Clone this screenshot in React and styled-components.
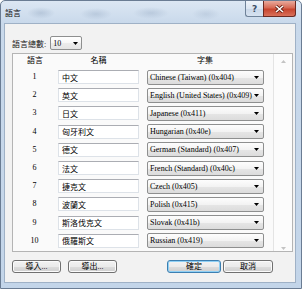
import styled, { createGlobalStyle } from 'styled-components'

const GlobalStyle = createGlobalStyle`
  html, body {
    margin: 0;
    padding: 0;
    background: #ffffff;
  }
  body {
    font-family: "Liberation Serif", "Noto Sans CJK TC", serif;
    font-size: 8px;
    color: #000;
  }
  * { box-sizing: border-box; }
`

const languages = [
  ['中文', 'Chinese (Taiwan) (0x404)'],
  ['英文', 'English (United States) (0x409)'],
  ['日文', 'Japanese (0x411)'],
  ['匈牙利文', 'Hungarian (0x40e)'],
  ['德文', 'German (Standard) (0x407)'],
  ['法文', 'French (Standard) (0x40c)'],
  ['捷克文', 'Czech (0x405)'],
  ['波蘭文', 'Polish (0x415)'],
  ['斯洛伐克文', 'Slovak (0x41b)'],
  ['俄羅斯文', 'Russian (0x419)'],
]

const Caret = ({ color = '#000' }) => (
  <svg width="5" height="3" viewBox="0 0 5 3">
    <path d="M0 0 H5 L2.5 3 Z" fill={color} />
  </svg>
)

const App = () => {
  return (
    <>
      <GlobalStyle />
      <Window>
        <TitleBar>
          <Title>語言</Title>
          <Caption>
            <HelpButton>?</HelpButton>
            <CloseButton>
              <svg width="9" height="8" viewBox="0 0 9 8">
                <path d="M1 1 L8 7 M8 1 L1 7" stroke="#5a1a10" strokeWidth="3" />
                <path d="M1 1 L8 7 M8 1 L1 7" stroke="#fff" strokeWidth="1.6" />
              </svg>
            </CloseButton>
          </Caption>
        </TitleBar>
        <Client>
          <TopRow>
            <Label>語言總數:</Label>
            <CountCombo>
              <span>10</span>
              <Caret />
            </CountCombo>
          </TopRow>
          <Panel>
            <Table>
              <HeadCell>語言</HeadCell>
              <HeadCell $width={81}>名稱</HeadCell>
              <HeadCell>字集</HeadCell>
              {languages.map(([name, charset], i) => (
                <Row key={i}>
                  <Num>{i + 1}</Num>
                  <NameInput defaultValue={name} />
                  <Combo>
                    <span>{charset}</span>
                    <Caret />
                  </Combo>
                </Row>
              ))}
            </Table>
            <ScrollBar>
              <Caret color="#c4c4c4" />
              <Caret color="#c4c4c4" />
            </ScrollBar>
          </Panel>
          <Footer>
            <Button $width={49}>導入...</Button>
            <Button $width={49}>導出...</Button>
            <Spacer />
            <Button $width={54} $default>確定</Button>
            <Button $width={50}>取消</Button>
          </Footer>
        </Client>
      </Window>
    </>
  )
}

const Window = styled.div`
  width: 302px;
  height: 289px;
  display: flex;
  flex-direction: column;
  padding: 0 5px 5px 3px;
  border: 1px solid #6a7c93;
  border-radius: 5px 5px 0 0;
  background:
    radial-gradient(ellipse 14px 6px at 40px 12px, rgba(150, 170, 195, 0.45), transparent),
    radial-gradient(ellipse 16px 6px at 95px 13px, rgba(150, 170, 195, 0.4), transparent),
    radial-gradient(ellipse 18px 6px at 150px 12px, rgba(150, 170, 195, 0.4), transparent),
    radial-gradient(ellipse 14px 6px at 205px 13px, rgba(150, 170, 195, 0.3), transparent),
    linear-gradient(to bottom, #dce7f3 0px, #c9d9eb 22px, #c3d5e9 100%);
`

const TitleBar = styled.div`
  height: 22px;
  display: flex;
  align-items: flex-start;
`

const Title = styled.div`
  margin: 6px 0 0 1px;
  line-height: 12px;
  color: #111;
  font-family: "Noto Sans CJK TC", sans-serif;
`

const Caption = styled.div`
  margin-left: auto;
  display: flex;
  height: 16px;
`

const HelpButton = styled.div`
  width: 18px;
  display: flex;
  align-items: center;
  justify-content: center;
  border: 1px solid #6f8299;
  border-top: none;
  border-right: none;
  border-radius: 0 0 0 3px;
  background: linear-gradient(to bottom, #eef3f9 0%, #dbe5f1 50%, #c9d7e8 51%, #d6e2f0 100%);
  font-family: "DejaVu Sans", sans-serif;
  font-size: 9px;
  font-weight: bold;
  color: #3d4f66;
`

const CloseButton = styled.div`
  width: 33px;
  display: flex;
  align-items: center;
  justify-content: center;
  border: 1px solid #6b2a22;
  border-top: none;
  border-radius: 0 0 3px 0;
  background: linear-gradient(to bottom, #e9aa9c 0%, #d76a55 45%, #c7442e 55%, #d9705a 100%);
`

const Client = styled.div`
  flex: 1;
  display: flex;
  flex-direction: column;
  padding: 12px 2px 9px 7px;
  background: #f2f2f2;
  border: 1px solid #9fb1c6;
`

const TopRow = styled.div`
  height: 14px;
  display: flex;
  align-items: center;
  gap: 4px;
`

const Label = styled.span`
  color: #111;
`

const CountCombo = styled.div`
  width: 32px;
  height: 14px;
  display: flex;
  align-items: center;
  justify-content: space-between;
  padding: 0 3px 0 2px;
  border: 1px solid #8e8f8f;
  border-radius: 2px;
  background: linear-gradient(to bottom, #ffffff 0%, #f7f7f7 50%, #ececec 51%, #e4e4e4 100%);
`

const Panel = styled.div`
  margin-top: 3px;
  height: 199px;
  display: flex;
  border: 1px solid #b4b4b4;
  background: #fafafa;
`

const Table = styled.div`
  flex: 1;
  display: grid;
  grid-template-columns: 45px 89px 117px;
  grid-template-rows: 14px;
  grid-auto-rows: 18.2px;
  align-items: center;
  align-content: start;
`

const HeadCell = styled.div`
  width: ${(p) => (p.$width ? `${p.$width}px` : 'auto')};
  text-align: center;
  padding-right: ${(p) => (p.$width ? 0 : 1)}px;
  line-height: 12px;
`

const Row = styled.div`
  display: contents;
`

const Num = styled.div`
  text-align: center;
  padding-right: 2px;
  line-height: 12px;
`

const NameInput = styled.input`
  width: 81px;
  height: 14px;
  margin: 0;
  padding: 0 3px;
  border: 1px solid #dde2e8;
  border-top-color: #abadb3;
  background: #fff;
  font: inherit;
  color: #000;
  outline: none;
`

const Combo = styled.div`
  width: 117px;
  height: 15px;
  display: flex;
  align-items: center;
  justify-content: space-between;
  padding: 0 4px 0 2px;
  border: 1px solid #8e8f8f;
  border-radius: 2px;
  background: linear-gradient(to bottom, #fdfdfd 0%, #f3f3f3 50%, #e6e6e6 51%, #dcdcdc 100%);
  white-space: nowrap;
`

const ScrollBar = styled.div`
  width: 19px;
  display: flex;
  flex-direction: column;
  align-items: center;
  justify-content: space-between;
  padding: 6px 0 1px;
  border-left: 1px solid #e4e4e4;
  background: #fcfcfc;

  svg:first-child {
    transform: rotate(180deg);
  }
`

const Footer = styled.div`
  margin-top: 8px;
  height: 13px;
  display: flex;
  gap: 7px;
  padding-right: 20px;

  & > :last-child {
    margin-left: -5px;
  }
`

const Spacer = styled.div`
  flex: 1;
`

const Button = styled.div`
  width: ${(p) => p.$width}px;
  display: flex;
  align-items: center;
  justify-content: center;
  border: 1px solid ${(p) => (p.$default ? '#3c7fb1' : '#707070')};
  border-radius: 3px;
  background: linear-gradient(to bottom, #f2f2f2 0%, #ebebeb 50%, #dddddd 51%, #cfcfcf 100%);
  box-shadow: inset 0 0 0 1px ${(p) => (p.$default ? '#8fd0f5' : '#fbfbfb')};
  line-height: 11px;
`

export default App
